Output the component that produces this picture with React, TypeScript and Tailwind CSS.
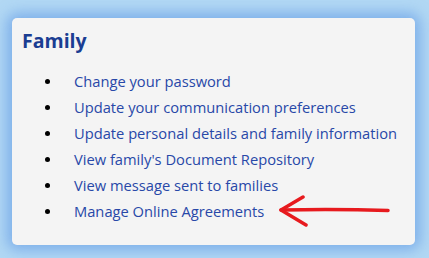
import React from "react";

const items = [
  "Change your password",
  "Update your communication preferences",
  "Update personal details and family information",
  "View family's Document Repository",
  "View message sent to families",
  "Manage Online Agreements",
];

export default function App() {
  return (
    <div
      className="w-[429px] h-[258px] bg-[#b2d8f4] pt-[18px] pl-[12px] overflow-hidden"
      style={{ fontFamily: '"Open Sans", sans-serif' }}
    >
      <div className="relative w-[403px] h-[227px] bg-[#f4f4f4] rounded-[5px] shadow-[0_0_14px_5px_rgba(80,140,225,0.55)] pt-[9px] pl-[10px]">
        <h2 className="text-[19.5px] leading-[28px] font-bold text-[#1a3d92]">Family</h2>
        <ul className="mt-[13px] pl-[23px] list-none">
          {items.map((t) => (
            <li key={t} className="flex items-center h-[26px] text-[14.7px] text-[#2848a8]">
              <span className="w-[5px] h-[5px] rounded-full bg-black mr-[24px] shrink-0" />
              <span>{t}</span>
            </li>
          ))}
        </ul>
        <svg
          className="absolute left-[266px] top-[177px]"
          width="116"
          height="34"
          viewBox="0 0 116 34"
          fill="none"
        >
          <path d="M3 15 Q60 14 110 15.5" stroke="#e71a1e" strokeWidth="3.5" strokeLinecap="round" />
          <path d="M25 2 L3 15 L28 30" stroke="#e71a1e" strokeWidth="3.5" strokeLinecap="round" strokeLinejoin="round" />
        </svg>
      </div>
    </div>
  );
}
